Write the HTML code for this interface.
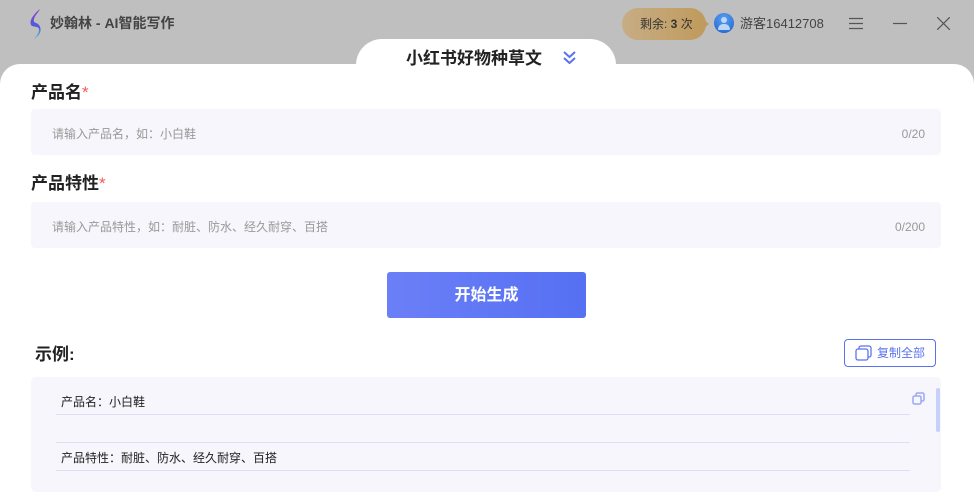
<!DOCTYPE html>
<html><head><meta charset="utf-8"><style>
*{margin:0;padding:0;box-sizing:border-box}
body{width:974px;height:487px;overflow:hidden;background:#bfbfbf;font-family:"Liberation Sans","Noto Sans CJK SC",sans-serif;position:relative;line-height:1.2}
.abs{position:absolute}
.panel{left:0;top:64px;width:974px;height:430px;background:#fff;border-radius:20px 20px 0 0}
.tab{left:356px;top:39px;width:260px;height:40px;background:#fff;border-radius:26px 26px 0 0}
.lbl{font-size:17px;font-weight:bold;color:#222}
.lbl span{color:#f05a5a;font-weight:normal}
.inp{left:31px;width:910px;height:46px;background:#f6f6fc;border-radius:4px;font-size:12px;color:#999}
.inp .ph{position:absolute;left:21px;top:18px}
.inp .ct{position:absolute;right:16px;top:18px}
.btn{left:387px;top:272px;width:199px;height:46px;background:linear-gradient(90deg,#6b7ff7,#5670f3);border-radius:3px;color:#fff;font-size:16px;font-weight:bold;text-align:center;line-height:48px}
.ex{left:31px;top:377px;width:910px;height:115px;background:#f6f6fc;border-radius:5px}
.row{position:absolute;left:25px;width:854px;border-bottom:1px solid #dde1f5;font-size:12px;color:#222;padding-left:5px;padding-top:2px}
</style></head><body>
<svg class="abs" style="left:28px;top:8px" width="16" height="32" viewBox="0 0 16 32"><defs><linearGradient id="g" x1="0" y1="0" x2="0" y2="1"><stop offset="0" stop-color="#8a3fd6"/><stop offset=".6" stop-color="#4a5fd8"/><stop offset="1" stop-color="#56c8d8"/></linearGradient></defs><path d="M12 1 C6 6 1 12 3 17 C5 20 12 17 11 23 C10 27 7 29 6 31 C13 27 14 21 11 17 C9 14 5 16 6 11 C7 7 11 4 12 1Z" fill="url(#g)"/></svg>
<div class="abs" style="left:50px;top:15px;font-size:14px;font-weight:bold;color:#444">妙翰林 - AI智能写作</div>
<div class="abs" style="left:622px;top:8px;width:84px;height:32px;border-radius:16px;background:linear-gradient(90deg,#c7ad85,#c09a5c);font-size:12px;color:#333;line-height:32px;padding-left:18px">剩余: <b>3</b> 次</div>
<div class="abs" style="left:704px;top:20px;width:0;height:0;border-top:4px solid transparent;border-bottom:4px solid transparent;border-left:5px solid #c09a5c"></div>
<div class="abs" style="left:714px;top:13px;width:20px;height:20px;border-radius:50%;background:radial-gradient(circle at 50% 30%,#5aa0f0,#1a5fd0)"></div>
<div class="abs" style="left:721px;top:17px;width:6px;height:6px;border-radius:50%;background:#bcd6f8"></div>
<div class="abs" style="left:718px;top:24px;width:12px;height:6px;border-radius:6px 6px 1px 1px;background:#bcd6f8"></div>
<div class="abs" style="left:740px;top:16px;font-size:13px;line-height:16px;color:#444">游客16412708</div>
<svg class="abs" style="left:849px;top:17px" width="14" height="13"><path d="M0 1.5H14M0 6.5H14M0 11.5H14" stroke="#555" stroke-width="1.2"/></svg>
<svg class="abs" style="left:893px;top:17px" width="14" height="13"><path d="M0 6.5H14" stroke="#555" stroke-width="1.2"/></svg>
<svg class="abs" style="left:937px;top:17px" width="13" height="13"><path d="M0 0L13 13M13 0L0 13" stroke="#555" stroke-width="1.2"/></svg>
<div class="abs panel"></div>
<div class="abs tab"></div>
<div class="abs" style="left:406px;top:49px;font-size:17px;font-weight:bold;color:#222">小红书好物种草文</div>
<svg class="abs" style="left:563px;top:51px" width="13" height="13"><path d="M1 1L6.5 6L12 1M1 7L6.5 12L12 7" stroke="#5a72f0" stroke-width="2" fill="none"/></svg>
<div class="abs lbl" style="left:31px;top:83px">产品名<span>*</span></div>
<div class="abs inp" style="top:109px"><span class="ph">请输入产品名，如：小白鞋</span><span class="ct">0/20</span></div>
<div class="abs lbl" style="left:31px;top:174px">产品特性<span>*</span></div>
<div class="abs inp" style="top:202px"><span class="ph">请输入产品特性，如：耐脏、防水、经久耐穿、百搭</span><span class="ct">0/200</span></div>
<div class="abs btn">开始生成</div>
<div class="abs lbl" style="left:35px;top:345px">示例:</div>
<div class="abs" style="left:844px;top:339px;width:92px;height:28px;border:1px solid #5a72f0;border-radius:4px;color:#5a72f0;font-size:12px;line-height:26px;padding-left:32px">复制全部</div>
<svg class="abs" style="left:855px;top:345px" width="17" height="16"><rect x="4" y="1" width="12" height="11" rx="2" fill="none" stroke="#5a72f0" stroke-width="1.3"/><rect x="1" y="4" width="12" height="11" rx="2" fill="#fff" stroke="#5a72f0" stroke-width="1.3"/></svg>
<div class="abs ex">
<div class="row" style="top:16px;height:22px">产品名：小白鞋</div>
<div class="row" style="top:38px;height:28px"></div>
<div class="row" style="top:72px;height:22px">产品特性：耐脏、防水、经久耐穿、百搭</div>
<svg style="position:absolute;left:881px;top:15px" width="13" height="13"><rect x="4" y="1" width="8" height="8" rx="1.5" fill="none" stroke="#9aa8f5" stroke-width="1.5"/><rect x="1" y="4" width="8" height="8" rx="1.5" fill="#f6f6fc" stroke="#9aa8f5" stroke-width="1.5"/></svg>
<div style="position:absolute;left:905px;top:11px;width:4px;height:44px;background:#c6d0fa;border-radius:2px"></div>
</div>
</body></html>
